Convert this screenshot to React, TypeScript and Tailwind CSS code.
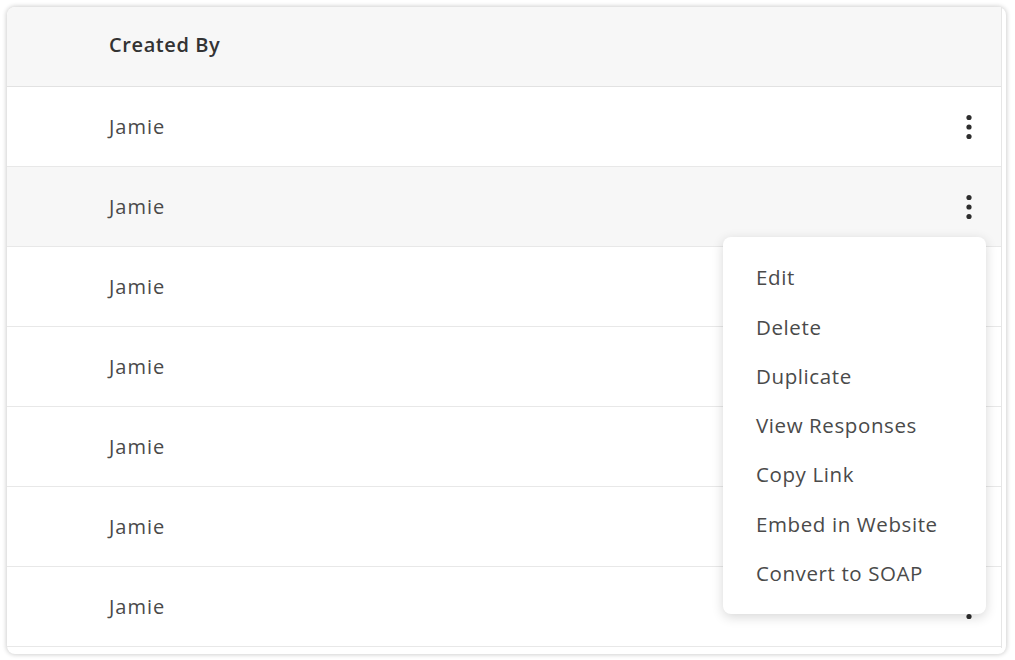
import React from "react";

const Kebab = () => (
  <svg width="6" height="26" viewBox="0 0 6 26" className="block">
    <circle cx="3" cy="3.5" r="2.6" fill="#2d2d2d" />
    <circle cx="3" cy="13" r="2.6" fill="#2d2d2d" />
    <circle cx="3" cy="22.5" r="2.6" fill="#2d2d2d" />
  </svg>
);

const menu = [
  "Edit",
  "Delete",
  "Duplicate",
  "View Responses",
  "Copy Link",
  "Embed in Website",
  "Convert to SOAP",
];

export default function App() {
  const rows = [0, 1, 2, 3, 4, 5, 6];
  return (
    <div
      className="w-[1015px] h-[660px] bg-white p-[7px] pr-[9px] pb-[6px]"
      style={{ fontFamily: "'Open Sans', Lato, sans-serif" }}
    >
      <div className="relative h-full w-full rounded-[8px] bg-white shadow-[0_0_4px_1px_rgba(0,0,0,0.18)] pr-[4px] pb-[6px]">
        <div className="h-full border-r border-[#e6e6e6] rounded-tl-[8px] overflow-hidden">
          <div className="h-[80px] bg-[#f7f7f7] border-b border-[#e2e2e2] flex items-center pl-[102px] rounded-tl-[8px]">
            <span className="text-[20px] font-semibold text-[#333333] tracking-[0.6px] -mt-[3px]">Created By</span>
          </div>
          {rows.map((i) => (
            <div
              key={i}
              className={`h-[80px] flex items-center justify-between pl-[102px] pr-[29px] border-b border-[#e8e8e8] ${
                i === 1 ? "bg-[#f7f7f7]" : "bg-white"
              }`}
            >
              <span className="text-[20px] text-[#4a4a4a] tracking-[1px]">Jamie</span>
              <Kebab />
            </div>
          ))}
        </div>
        <div className="absolute left-[716px] top-[230px] w-[263px] rounded-[8px] bg-white shadow-[0_3px_12px_rgba(0,0,0,0.16)] pt-[16px] pb-[16px]">
          {menu.map((m) => (
            <div key={m} className="h-[49.3px] flex items-center pl-[33px] text-[20.5px] text-[#4a4a4a] tracking-[0.6px]">
              {m}
            </div>
          ))}
        </div>
      </div>
    </div>
  );
}
